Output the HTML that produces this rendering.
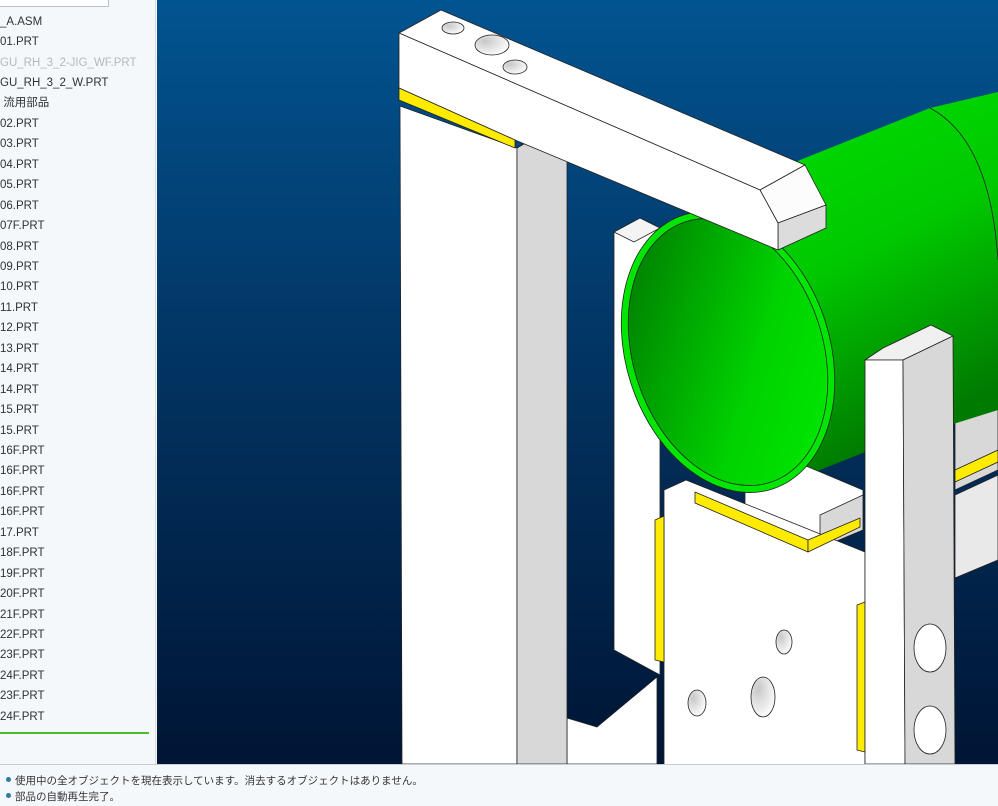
<!DOCTYPE html>
<html><head><meta charset="utf-8"><style>
*{margin:0;padding:0;box-sizing:border-box}
body{width:998px;height:806px;overflow:hidden;background:#f5f8fa;font-family:"Liberation Sans","Noto Sans CJK JP",sans-serif;position:relative}
#left{position:absolute;left:0;top:0;width:156px;height:764px;background:#f5f8fa;border-right:1px solid #d6dde2}
#left .box{position:absolute;left:-1px;top:-2px;width:110px;height:9px;border:1px solid #b9c2c8;background:#fff}
#left .it{position:absolute;left:0;font-size:11.5px;color:#2e3236;white-space:nowrap;line-height:14px}
#left .g{color:#b4b8bb}
#left .line{position:absolute;left:0;top:732px;width:149px;height:2px;background:#4bbf2a}
#vp{position:absolute;left:157px;top:0;width:841px;height:764px}
#status{position:absolute;left:0;top:764px;width:998px;height:42px;background:#f5f8fa;border-top:1px solid #c4ccd2}
#status div{position:absolute;left:15px;font-size:10.5px;color:#333;white-space:nowrap}
#status span{position:absolute;left:-9px;top:4px;width:5px;height:5px;border-radius:50%;background:#2d7aa0}
</style></head><body>
<div id="left"><div class="box"></div>
<div class="it" style="top:15px">_A.ASM</div>
<div class="it" style="top:35px">01.PRT</div>
<div class="it g" style="top:56px">GU_RH_3_2-JIG_WF.PRT</div>
<div class="it" style="top:76px">GU_RH_3_2_W.PRT</div>
<div class="it" style="top:96px">&nbsp;流用部品</div>
<div class="it" style="top:117px">02.PRT</div>
<div class="it" style="top:137px">03.PRT</div>
<div class="it" style="top:158px">04.PRT</div>
<div class="it" style="top:178px">05.PRT</div>
<div class="it" style="top:199px">06.PRT</div>
<div class="it" style="top:219px">07F.PRT</div>
<div class="it" style="top:240px">08.PRT</div>
<div class="it" style="top:260px">09.PRT</div>
<div class="it" style="top:280px">10.PRT</div>
<div class="it" style="top:301px">11.PRT</div>
<div class="it" style="top:321px">12.PRT</div>
<div class="it" style="top:342px">13.PRT</div>
<div class="it" style="top:362px">14.PRT</div>
<div class="it" style="top:383px">14.PRT</div>
<div class="it" style="top:403px">15.PRT</div>
<div class="it" style="top:424px">15.PRT</div>
<div class="it" style="top:444px">16F.PRT</div>
<div class="it" style="top:464px">16F.PRT</div>
<div class="it" style="top:485px">16F.PRT</div>
<div class="it" style="top:505px">16F.PRT</div>
<div class="it" style="top:526px">17.PRT</div>
<div class="it" style="top:546px">18F.PRT</div>
<div class="it" style="top:567px">19F.PRT</div>
<div class="it" style="top:587px">20F.PRT</div>
<div class="it" style="top:608px">21F.PRT</div>
<div class="it" style="top:628px">22F.PRT</div>
<div class="it" style="top:648px">23F.PRT</div>
<div class="it" style="top:669px">24F.PRT</div>
<div class="it" style="top:689px">23F.PRT</div>
<div class="it" style="top:710px">24F.PRT</div>
<div class="line"></div>
</div>
<svg id="vp" width="841" height="764" viewBox="157 0 841 764" xmlns="http://www.w3.org/2000/svg">
<defs>
<linearGradient id="bg" x1="0" y1="0" x2="0" y2="1"><stop offset="0" stop-color="#025491"/><stop offset="0.5" stop-color="#02325f"/><stop offset="1" stop-color="#001535"/></linearGradient>
<linearGradient id="cyl" x1="0" y1="0" x2="0.4" y2="1"><stop offset="0" stop-color="#00e400"/><stop offset="0.55" stop-color="#00c800"/><stop offset="1" stop-color="#007a00"/></linearGradient>
<linearGradient id="inn" x1="0" y1="0" x2="1" y2="1"><stop offset="0" stop-color="#006e00"/><stop offset="0.6" stop-color="#00d200"/><stop offset="1" stop-color="#00ee00"/></linearGradient>
<radialGradient id="hole" cx="0.3" cy="0.3" r="0.8"><stop offset="0" stop-color="#c8c8c8"/><stop offset="1" stop-color="#fff"/></radialGradient>
</defs>
<rect x="157" y="0" width="841" height="764" fill="url(#bg)"/>
<g stroke="#222" stroke-width="0.8" stroke-linejoin="round">
<!-- far right stuff -->
<polygon points="955,420 998,400 998,470 955,490" fill="#d8d8d8"/>
<polygon points="955,470 998,450 998,462 955,482" fill="#ffeb00"/>
<polygon points="955,495 998,475 998,560 955,578" fill="#e9e9e9"/>
<!-- back panel behind cylinder -->
<polygon points="614,232 640,218 660,228 660,675 614,650" fill="#fff"/>
<polygon points="614,232 640,218 660,228 634,242" fill="#f4f4f4"/>
<!-- floor -->
<polygon points="567,718 597,727 657,677 657,764 567,764" fill="#fff"/>
<!-- cylinder body -->
<polygon points="680,222 800,160 930,108 998,92 998,410 870,450 790,482" fill="url(#cyl)" stroke="none"/>
<path d="M930,108 Q990,140 998,260" fill="none"/>
<!-- block under cylinder -->
<polygon points="745,470 780,455 863,490 863,530 820,548 745,515" fill="#fff"/>
<polygon points="820,515 863,495 863,530 820,548" fill="#d8d8d8"/>
<polygon points="664,490 686,480 865,552 865,770 664,770" fill="#fff"/>
<polygon points="695,492 808,540 808,552 695,503" fill="#ffeb00"/>
<polygon points="808,540 860,518 860,527 808,552" fill="#ffeb00"/>
<polygon points="655,520 664,516 664,662 655,660" fill="#ffeb00"/>
<polygon points="857,605 865,602 865,752 857,750" fill="#ffeb00"/>
<ellipse cx="784" cy="642" rx="8" ry="12" fill="url(#hole)"/>
<ellipse cx="763" cy="697" rx="12" ry="20" fill="url(#hole)"/>
<ellipse cx="697" cy="703" rx="9" ry="13" fill="url(#hole)"/>
<!-- rim -->
<g transform="rotate(-18 728 352)">
<ellipse cx="728" cy="352" rx="102" ry="144" fill="#00e600"/>
<ellipse cx="728" cy="352" rx="95" ry="137" fill="url(#inn)"/>
</g>
<!-- right post -->
<polygon points="865,360 883,348 931,325 953,336 903,360" fill="#f0f0f0"/>
<polygon points="865,360 903,360 905,764 865,764" fill="#fff"/>
<polygon points="903,360 953,336 955,764 905,764" fill="#d8d8d8"/>
<ellipse cx="930" cy="648" rx="16" ry="24" fill="#fff"/>
<ellipse cx="930" cy="730" rx="16" ry="24" fill="#fff"/>
<!-- left post -->
<polygon points="400,106 517,148 517,764 402,764" fill="#fff"/>
<polygon points="517,148 529,141 567,160 567,764 517,764" fill="#d8d8d8"/>
<!-- top bar -->
<polygon points="399,33 441,10 805,165 760,190" fill="#fff"/>
<polygon points="760,190 805,165 826,205 778,223" fill="#fcfcfc"/>
<polygon points="778,223 826,205 826,228 778,250" fill="#dcdcdc"/>
<polygon points="399,33 760,190 778,223 778,250 515,140 399,88" fill="#fff"/>
<polygon points="399,88 515,140 515,148 399,100" fill="#ffeb00"/>
<ellipse cx="453" cy="28" rx="11" ry="6" fill="url(#hole)"/>
<ellipse cx="492" cy="45" rx="17" ry="10" fill="url(#hole)"/>
<ellipse cx="515" cy="67" rx="12" ry="7" fill="url(#hole)"/>
</g>
</svg>
<div id="status">
<div style="top:8px"><span></span>使用中の全オブジェクトを現在表示しています。消去するオブジェクトはありません。</div>
<div style="top:24px"><span></span>部品の自動再生完了。</div>
</div>
</body></html>
